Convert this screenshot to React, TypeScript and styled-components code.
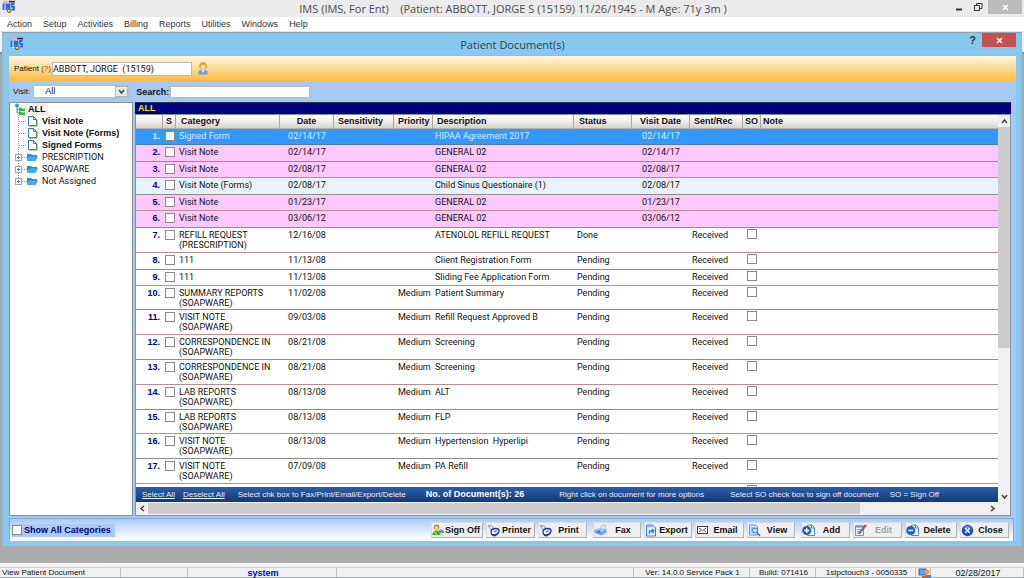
import React from "react";
import styled, { createGlobalStyle, css } from "styled-components";

const ui = `"Liberation Sans", Arial, sans-serif`;
const plain = `Roboto, "Liberation Sans", sans-serif`;
const caption = `"Open Sans", "Noto Sans", sans-serif`;

const GlobalStyle = createGlobalStyle`
  *, *::before, *::after { box-sizing: border-box; }
  body { margin: 0; font-family: ${ui}; font-size: 9px; line-height: 12px; color: #111; overflow: hidden; }
  button, input, select { font: inherit; color: inherit; margin: 0; }
  svg { display: block; flex: none; }
`;

const Page = styled.div`
  display: flex;
  flex-direction: column;
  height: 100vh;
  background: #ababab;
`;

/* ---------- application frame ---------- */
const AppBar = styled.header`
  display: grid;
  grid-template-columns: 1fr auto 1fr;
  align-items: start;
  height: 17px;
  padding-left: 2px;
  background: #ebebeb;
`;
const AppTitle = styled.h1`
  margin: 0;
  font: 400 11px/17px ${caption};
  color: #4c4c4c;
  white-space: pre;
`;
const CaptionButtons = styled.div<{ $edge?: number }>`
  display: flex;
  justify-content: flex-end;
  align-items: flex-start;
  padding-right: ${(p) => p.$edge ?? 0}px;
`;
const CaptionButton = styled.button<{ $tone?: string; $w?: number }>`
  display: grid;
  place-items: center;
  width: ${(p) => p.$w ?? 19}px;
  height: 14px;
  padding: 0;
  border: 0;
  font-size: 11px;
  color: ${(p) => (p.$tone ? "#fff" : "#333")};
  background: ${(p) => p.$tone ?? "transparent"};
`;
const MenuBar = styled.nav`
  display: flex;
  gap: 11px;
  height: 15px;
  padding-left: 7px;
  background: #fff;
  border-bottom: 1px solid #e4e4e4;
`;
const MenuItem = styled.button`
  padding: 0;
  border: 0;
  background: none;
  font-size: 9px;
  line-height: 14px;
  color: #333;
`;
const Workspace = styled.main`
  flex: 1;
  min-height: 0;
  display: flex;
  padding: 0 2px 17px;
  background: linear-gradient(#f4f4f4 20px, #8d8d8d 20px, #ababab 24px);
`;

/* ---------- document window ---------- */
const Window = styled.section`
  flex: 1;
  min-width: 0;
  display: flex;
  flex-direction: column;
  padding: 0 5px 5px 6px;
  border: 1px solid #86bfe0;
  border-top-color: #8ea4b0;
  border-bottom: 0;
  background: #88c8ec;
`;
const WindowBar = styled.header`
  display: grid;
  grid-template-columns: 1fr auto 1fr;
  height: 22px;
`;
const WindowIcon = styled.div`
  padding: 4px 0 0 1px;
`;
const WindowTitle = styled.h2`
  margin: 0;
  font: 400 11px/23px ${caption};
  color: #2d3f4d;
`;
const WindowBody = styled.div`
  flex: 1;
  min-height: 0;
  display: flex;
  flex-direction: column;
  background: #a5c9f0;
`;
const PatientBar = styled.div`
  display: flex;
  align-items: center;
  height: 26px;
  padding-left: 5px;
  border-top: 1px solid #dcae66;
  background: linear-gradient(#fff7e0, #fdd88e 55%, #fdba3c);
`;
const Label = styled.label<{ $bold?: boolean }>`
  font-size: ${(p) => (p.$bold ? 9 : 8)}px;
  font-weight: ${(p) => (p.$bold ? 700 : 400)};
  margin-right: 1px;
  white-space: pre;
`;
const Hint = styled.span`
  color: #a5381a;
`;
const TextField = styled.input<{ $h: number }>`
  width: 140px;
  height: ${(p) => p.$h}px;
  padding: 0;
  border: 1px solid #b9b9b9;
  background: #fff;
  font-family: ${plain};
  font-size: 9px;
  line-height: 11px;
  white-space: pre;
  outline: 0;
`;
const PatientIcon = styled.div`
  margin-left: 6px;
`;
const FilterBar = styled.div`
  display: flex;
  align-items: center;
  height: 21px;
  padding-left: 4px;
`;
const SelectBox = styled.div`
  display: grid;
  grid-template-columns: 1fr 13px;
  width: 96px;
  height: 13px;
  margin: 0 7px 0 2px;
  border: 1px solid #b4bcc6;
  background: #fff;
`;
const Select = styled.select`
  grid-area: 1 / 1 / 2 / 3;
  appearance: none;
  width: 100%;
  padding: 0 0 0 11px;
  border: 0;
  background: none;
  font-size: 9px;
  line-height: 11px;
  outline: 0;
`;
const SelectArrow = styled.span`
  grid-area: 1 / 2 / 2 / 3;
  display: grid;
  place-items: center;
  border: 1px solid #b4b4b4;
  background: #e9e9e9;
  pointer-events: none;
`;
const Columns = styled.div`
  flex: 1;
  min-height: 0;
  display: flex;
  gap: 2px;
  padding-right: 5px;
`;

/* ---------- category tree ---------- */
const Tree = styled.ul`
  flex: none;
  width: 124px;
  margin: 0;
  padding: 0 0 0 4px;
  list-style: none;
  border: 1px solid #8a8f98;
  background: #fff;
`;
const TreeItem = styled.li<{ $bold?: boolean }>`
  display: flex;
  align-items: center;
  height: 12px;
  font-family: ${(p) => (p.$bold ? ui : plain)};
  font-size: 9px;
  line-height: 12px;
  font-weight: ${(p) => (p.$bold ? 700 : 400)};
  white-space: nowrap;
`;
const TreeRoot = styled.span`
  padding: 0 2px;
  background: #f0f0f0;
`;
const TreeText = styled.span`
  margin-left: 2px;
`;

/* ---------- document list ---------- */
const ListPane = styled.div`
  flex: 1;
  min-width: 0;
  display: flex;
  flex-direction: column;
`;
const ListCaption = styled.div`
  flex: none;
  height: 12px;
  padding-left: 3px;
  border-top: 1px solid #2a3350;
  background: #000080;
  color: #f3e600;
  font-weight: 700;
  line-height: 11px;
`;
const ListFrame = styled.div`
  flex: 1;
  min-height: 0;
  display: grid;
  grid-template-columns: minmax(0, 1fr) 12px;
  grid-template-rows: minmax(0, 1fr) 13px;
  border: 1px solid #8a8f98;
  background: #f0f0f0;
`;
const ListMain = styled.div`
  min-height: 0;
  display: flex;
  flex-direction: column;
  background: #fff;
`;
const Viewport = styled.div`
  flex: 1;
  min-height: 0;
  overflow: hidden;
`;
const Table = styled.table`
  width: 100%;
  table-layout: fixed;
  border-collapse: separate;
  border-spacing: 0;
`;
const Col = styled.col<{ $w?: number }>`
  ${(p) => p.$w && css`width: ${p.$w}px;`}
`;
const Th = styled.th<{ $pad: number; $center?: boolean }>`
  height: 14px;
  padding: 0 0 0 ${(p) => p.$pad}px;
  text-align: ${(p) => (p.$center ? "center" : "left")};
  font-weight: 700;
  line-height: 13px;
  white-space: nowrap;
  border-right: 1px solid #a9a69d;
  border-bottom: 1px solid #b5b1a6;
  background: linear-gradient(#fff, #f4f3f0 40%, #d5d2c8);
  &:last-child { border-right: 0; }
`;
type Tone = "selected" | "note" | "form" | "plain";
const tones: Record<Tone, string> = {
  selected: "#3399ff",
  note: "#ffc8ff",
  form: "#e8f1ff",
  plain: "#ffffff",
};
const Row = styled.tr<{ $tone: Tone; $double: boolean }>`
  background: ${(p) => tones[p.$tone]};
  color: ${(p) => (p.$tone === "selected" ? "#d6ebff" : "#111")};
  td { height: ${(p) => (p.$double ? 25 : 16)}px; border-bottom: 1px solid #8e8e8e; }
  &:nth-child(even) td { height: ${(p) => (p.$double ? 25 : 17)}px; }
  &:nth-child(odd) td { border-bottom-color: ${(p) => (p.$tone === "selected" ? "#4d78a8" : "#b98f95")}; }
  &:nth-child(5n) td { height: ${(p) => (p.$double ? 24 : 16)}px; }
`;
const Td = styled.td<{ $pad?: number; $center?: boolean }>`
  padding: 2px 0 0 ${(p) => p.$pad ?? 0}px;
  vertical-align: top;
  text-align: ${(p) => (p.$center ? "center" : "left")};
  font-family: ${plain};
  font-size: 9px;
  line-height: 10px;
  white-space: pre;
`;
const NumTd = styled(Td)<{ $selected: boolean }>`
  padding-right: 3px;
  text-align: right;
  font-family: ${ui};
  font-weight: 700;
  color: ${(p) => (p.$selected ? "#d6ebff" : "#000080")};
`;
const Check = styled.input`
  display: block;
  flex: none;
  appearance: none;
  width: 10px;
  height: 10px;
  border: 1px solid #8a8a8a;
  background: #fff;
`;
const SignTd = styled(Td)`
  padding-top: 1px;
`;
const ListFooter = styled.div`
  flex: none;
  display: flex;
  align-items: center;
  height: 15px;
  padding-left: 6px;
  background: linear-gradient(#2c5fa8, #103a78);
  color: #e4ecf8;
  font-size: 8px;
  line-height: 15px;
  white-space: nowrap;
`;
const FooterLink = styled.a`
  margin-right: 8px;
  color: inherit;
  text-decoration: underline;
`;
const FooterText = styled.span<{ $gap: number }>`
  margin-left: ${(p) => p.$gap}px;
`;
const Count = styled.strong`
  margin-left: 20px;
  font-size: 9px;
  color: #fff;
`;
const VScroll = styled.div`
  display: flex;
  flex-direction: column;
  justify-content: space-between;
`;
const HScroll = styled.div`
  grid-column: 1 / 3;
  display: flex;
  padding-right: 12px;
`;
const ScrollButton = styled.button`
  display: grid;
  place-items: center;
  flex: none;
  width: 12px;
  height: 12px;
  padding: 0;
  border: 0;
  background: #f0f0f0;
  color: #555;
`;
const VTrack = styled.div`
  flex: 1;
`;
const VThumb = styled.div`
  height: 61%;
  background: #cdcdcd;
`;
const HTrack = styled.div`
  flex: 1;
  padding: 1px 0;
`;
const HThumb = styled.div`
  width: 85%;
  height: 100%;
  background: #cdcdcd;
`;

/* ---------- actions ---------- */
const ActionBar = styled.div`
  display: flex;
  align-items: center;
  height: 23px;
  margin: 2px 2px 0 0;
  padding: 0 4px 0 2px;
  border: 1px solid #86a8d8;
  border-bottom: 0;
  background: linear-gradient(#a9cbf6, #dfeafc 55%, #fff);
`;
const ShowAll = styled.label`
  display: flex;
  align-items: center;
  gap: 2px;
  height: 13px;
  padding-right: 4px;
  margin-right: auto;
  background: #a9cbf6;
  color: #000080;
  font-weight: 700;
`;
const Action = styled.button<{ $gap?: number; $w?: number }>`
  display: flex;
  align-items: center;
  width: ${(p) => p.$w ?? 49}px;
  height: 16px;
  margin-left: ${(p) => p.$gap ?? 3}px;
  padding: 0 1px 0 0;
  border: 1px solid #b4b4b4;
  border-top-color: #dcdcdc;
  border-left-color: #dcdcdc;
  background: #f0efee;
  font-size: 9px;
  font-weight: 700;
  color: #111;
  &:disabled { color: #a0a0a0; }
  span { flex: 1; text-align: center; white-space: nowrap; }
`;

/* ---------- status bar ---------- */
const StatusBar = styled.footer`
  display: flex;
  height: 15px;
  padding-top: 3px;
  border-top: 1px solid #fff;
  border-bottom: 1px solid #9fb4be;
  background: #f0f0f0;
`;
const StatusCell = styled.div<{ $w?: number; $center?: boolean; $date?: boolean; $blue?: boolean }>`
  display: flex;
  align-items: center;
  justify-content: ${(p) => (p.$center ? "center" : "flex-start")};
  ${(p) => (p.$w ? css`flex: none; width: ${p.$w}px;` : css`flex: 1;`)}
  padding-left: 2px;
  border-top: 1px solid #d2d2d2;
  border-right: 1px solid #c0c0c0;
  font-size: ${(p) => (p.$blue || p.$date ? 9 : 8)}px;
  line-height: 10px;
  white-space: nowrap;
  color: ${(p) => (p.$blue ? "#0000e6" : "#111")};
  font-weight: ${(p) => (p.$blue ? 700 : 400)};
`;

/* ---------- drawings ---------- */
const ImsLogo = () => (
  <svg width="13" height="13" viewBox="0 0 13 13" aria-hidden="true">
    <rect x="1" y="1" width="11" height="10" rx="2" fill="#dbe7f7" />
    <circle cx="2.500" cy="2" r="1.500" fill="#f4a98a" />
    <circle cx="5.500" cy="2" r="1.500" fill="#f0b9a2" />
    <path d="M7 .8h6v1.700H7z" fill="#3a2c24" />
    <path d="M1.500 3.500v6.500M4.500 10V3.500l1.500 3.500 1.500-3.500V10M12.500 4H10v2.800h2V9.500H9.500" fill="none" stroke="#2468e0" strokeWidth="1.800" />
    <circle cx="7.200" cy="10.800" r="1.800" fill="#f7d61b" stroke="#4a3a10" strokeWidth=".8" />
  </svg>
);
const Cross = () => (
  <svg width="7" height="7" viewBox="0 0 7 7" aria-hidden="true">
    <path d="M1 1l5 5M6 1L1 6" stroke="currentColor" strokeWidth="1.500" />
  </svg>
);
const Chevron = ({ d }: { d: string }) => (
  <svg width="7" height="7" viewBox="0 0 7 7" aria-hidden="true">
    <path d={d} fill="none" stroke="#444" strokeWidth="1.500" />
  </svg>
);
const UP = "M1 5l2.500-3L6 5";
const DOWN = "M1 2l2.500 3L6 2";
const LEFT = "M5 1L2 3.500 5 6";
const RIGHT = "M2 1l3 2.500L2 6";

const Person = () => (
  <svg width="10" height="13" viewBox="0 0 10 13" aria-hidden="true">
    <circle cx="5" cy="4" r="3.800" fill="#dca21c" />
    <ellipse cx="5" cy="5" rx="2.400" ry="2.600" fill="#fbdcae" />
    <path d="M.5 12.500V10C.5 8.500 2 8 5 8s4.500.5 4.500 2v2.500z" fill="#5aa5e6" />
    <path d="M3.500 8.200L5 11l1.500-2.800z" fill="#fff" />
  </svg>
);
const RootIcon = () => (
  <svg width="12" height="12" viewBox="0 0 12 12" aria-hidden="true">
    <circle cx="3" cy="2.500" r="2" fill="#3b8fe0" />
    <path d="M3 4v6h3M3 6.500h3" fill="none" stroke="#5b8ea0" />
    <path d="M5 4.500h2l1 1h3V8H5zM5 8.500h2l1 1h3V12H5z" fill="#44b03c" />
  </svg>
);
const LeafIcon = () => (
  <svg width="26" height="12" viewBox="0 0 26 12" aria-hidden="true">
    <path d="M4.500 0v12M5 6.500h8" stroke="#999" strokeDasharray="1 1" />
    <path d="M14.500 1.500h5l3 3v6h-8z" fill="#fff" stroke="#3f6fc4" />
    <path d="M19.500 1.500v3h3" fill="none" stroke="#3f6fc4" />
    <path d="M15 11h8V5" fill="none" stroke="#6a9a3c" />
  </svg>
);
const FolderIcon = ({ last }: { last?: boolean }) => (
  <svg width="26" height="12" viewBox="0 0 26 12" aria-hidden="true">
    <path d={last ? "M4.500 0v4" : "M4.500 0v12"} stroke="#999" strokeDasharray="1 1" />
    <path d="M8 6.500h5" stroke="#999" strokeDasharray="1 1" />
    <rect x="1.500" y="3.500" width="6" height="6" fill="#fff" stroke="#a4a4a4" />
    <path d="M3 6.500h3M4.500 5v3" stroke="#6676a8" />
    <path d="M13 3h4l1 1h5v2h-8l-2 4z" fill="#2b8ad8" />
    <path d="M13 10l2.500-4.500H24L21.500 10z" fill="#41aaf2" />
  </svg>
);
const SignIcon = () => (
  <svg width="12" height="12" viewBox="0 0 12 12" aria-hidden="true">
    <circle cx="4.500" cy="3" r="2.600" fill="#c9781c" />
    <circle cx="4.500" cy="3.800" r="1.700" fill="#f9d3a0" />
    <path d="M.5 11c0-3 1.500-4.500 4-4.500S8.500 8 8.500 11z" fill="#3fae2a" />
    <path d="M7 9V6l2.500-.5L12 7v2z" fill="#5a8fd0" />
    <path d="M2 8l3 2" stroke="#ffe34a" />
  </svg>
);
const PrinterIcon = () => (
  <svg width="13" height="13" viewBox="0 0 13 13" aria-hidden="true">
    <path d="M1 1.500l4 .5 3.500 4L5 7z" fill="#dce8fa" stroke="#6a87c0" strokeWidth=".8" />
    <path d="M4 8c0-2 2-3.500 5-3.500 2 0 3 .8 3 2.200C12 9 9.500 11 7 11c-2 0-3-1-3-3z" fill="#f3f6fc" stroke="#25359a" strokeWidth="1.300" />
    <path d="M4 9c1 2 4 2.500 8-1.500L11.500 10 8 12.500 5 12z" fill="#2a3f9c" />
    <path d="M6 7.500l3-1.500 1.500 1L8 8.500z" fill="#5d8fe6" />
  </svg>
);
const FaxIcon = () => (
  <svg width="13" height="12" viewBox="0 0 13 12" aria-hidden="true">
    <path d="M.5 5.500L5 4l7.500 1v3.500L7.500 11.500.5 9z" fill="#69a5ea" />
    <path d="M.5 5.500L5 4l7.500 1-5 3z" fill="#b5d6fa" />
    <path d="M6 4.500L9 .8l3 1-2 4z" fill="#e4f0fe" stroke="#7fa8dc" strokeWidth=".7" />
    <circle cx="5" cy="7.500" r="1.500" fill="#3f78d0" />
  </svg>
);
const ExportIcon = () => (
  <svg width="12" height="13" viewBox="0 0 12 13" aria-hidden="true">
    <path d="M1.500 1h6l3 3v8h-9z" fill="#e6f1ff" stroke="#3a7bd0" />
    <path d="M1.500 1h6v2h-6z" fill="#7fb2ee" />
    <path d="M4.500 10V7h4M7 5l2 2-2 2" fill="none" stroke="#2d7be0" strokeWidth="1.300" />
  </svg>
);
const EmailIcon = () => (
  <svg width="13" height="12" viewBox="0 0 13 12" aria-hidden="true">
    <rect x="1.500" y="2.500" width="10" height="7" fill="#fff" stroke="#444" />
    <path d="M3 4l3.500 2.500L10 4M3 8l2-1.500M10 8L8 6.500" fill="none" stroke="#444" strokeWidth=".9" />
  </svg>
);
const ViewIcon = () => (
  <svg width="13" height="13" viewBox="0 0 13 13" aria-hidden="true">
    <path d="M1.500 1h6l2 2v8h-8z" fill="#d9e9fd" stroke="#5b92d8" />
    <path d="M3 4h4M3 6h3M3 8h3" stroke="#5b92d8" />
    <circle cx="7" cy="6.500" r="2.500" fill="#c4e0ff" stroke="#3f7fd0" />
    <path d="M9 8.500l3 3.500" stroke="#3f7fd0" strokeWidth="1.500" />
  </svg>
);
const PageBadge = ({ plus }: { plus?: boolean }) => (
  <svg width="13" height="13" viewBox="0 0 13 13" aria-hidden="true">
    <path d="M5.500 1h4.500l2.500 2.500v8h-7z" fill="#eaf3ff" stroke="#4a8ad8" />
    <path d="M9.500 1v3h3" fill="none" stroke="#4a8ad8" />
    <circle cx="4.700" cy="6.500" r="4.500" fill="#1f5fc8" />
    <path d={plus ? "M2.200 6.500h5M4.700 4v5" : "M2.200 6.500h5"} stroke="#fff" strokeWidth="1.400" />
  </svg>
);
const EditIcon = () => (
  <svg width="13" height="13" viewBox="0 0 13 13" aria-hidden="true">
    <path d="M1.500 2h8v9.500h-8z" fill="#f2f2f2" stroke="#8a9098" />
    <path d="M1.500 1.500h8v2h-8z" fill="#7390b0" />
    <path d="M3 5.500h4M3 7.500h3M3 9.500h3" stroke="#9aa2ac" />
    <path d="M5 9.500l5-6" stroke="#56789c" strokeWidth="2" />
    <path d="M9.500 4L12 1" stroke="#c9452e" strokeWidth="2.200" />
  </svg>
);
const CloseIcon = () => (
  <svg width="13" height="13" viewBox="0 0 13 13" aria-hidden="true">
    <circle cx="6.500" cy="6.500" r="5.700" fill="#1d55b0" />
    <path d="M2.500 4.500a4.500 4.500 0 018 0z" fill="#5d96e4" />
    <path d="M4.300 4.300l4.400 4.400M8.700 4.300L4.300 8.700" stroke="#fff" strokeWidth="1.600" />
  </svg>
);
const StatusIcon = () => (
  <svg width="13" height="10" viewBox="0 0 13 10" aria-hidden="true">
    <rect x="1" y="1" width="7" height="6" fill="#5aa3ee" stroke="#2f66b8" />
    <circle cx="9" cy="4" r="2.500" fill="#f0a040" />
    <path d="M4 8h8v2H4z" fill="#d8562c" />
    <path d="M8 7h5v3H9z" fill="#3f84dc" />
  </svg>
);

/* ---------- data ---------- */
type Doc = {
  tone?: Tone;
  cat: string;
  date: string;
  prio?: string;
  desc: string;
  status?: string;
  visit?: string;
};
const docs: Doc[] = [
  { tone: "selected", cat: "Signed Form", date: "02/14/17", desc: "HIPAA Agreement 2017", visit: "02/14/17" },
  { tone: "note", cat: "Visit Note", date: "02/14/17", desc: "GENERAL 02", visit: "02/14/17" },
  { tone: "note", cat: "Visit Note", date: "02/08/17", desc: "GENERAL 02", visit: "02/08/17" },
  { tone: "form", cat: "Visit Note (Forms)", date: "02/08/17", desc: "Child Sinus Questionaire (1)", visit: "02/08/17" },
  { tone: "note", cat: "Visit Note", date: "01/23/17", desc: "GENERAL 02", visit: "01/23/17" },
  { tone: "note", cat: "Visit Note", date: "03/06/12", desc: "GENERAL 02", visit: "03/06/12" },
  { cat: "REFILL REQUEST\n(PRESCRIPTION)", date: "12/16/08", desc: "ATENOLOL REFILL REQUEST", status: "Done" },
  { cat: "111", date: "11/13/08", desc: "Client Registration Form", status: "Pending" },
  { cat: "111", date: "11/13/08", desc: "Sliding Fee Application Form", status: "Pending" },
  { cat: "SUMMARY REPORTS\n(SOAPWARE)", date: "11/02/08", prio: "Medium", desc: "Patient Summary", status: "Pending" },
  { cat: "VISIT NOTE\n(SOAPWARE)", date: "09/03/08", prio: "Medium", desc: "Refill Request Approved B", status: "Pending" },
  { cat: "CORRESPONDENCE IN\n(SOAPWARE)", date: "08/21/08", prio: "Medium", desc: "Screening", status: "Pending" },
  { cat: "CORRESPONDENCE IN\n(SOAPWARE)", date: "08/21/08", prio: "Medium", desc: "Screening", status: "Pending" },
  { cat: "LAB REPORTS\n(SOAPWARE)", date: "08/13/08", prio: "Medium", desc: "ALT", status: "Pending" },
  { cat: "LAB REPORTS\n(SOAPWARE)", date: "08/13/08", prio: "Medium", desc: "FLP", status: "Pending" },
  { cat: "VISIT NOTE\n(SOAPWARE)", date: "08/13/08", prio: "Medium", desc: "Hypertension  Hyperlipi", status: "Pending" },
  { cat: "VISIT NOTE\n(SOAPWARE)", date: "07/09/08", prio: "Medium", desc: "PA Refill", status: "Pending" },
];
const columnWidths = [27, 13, 104, 54, 60, 39, 141, 58, 58, 53, 18];

const DocRow = ({ doc, index }: { doc: Doc; index: number }) => {
  const tone = doc.tone ?? "plain";
  return (
    <Row $tone={tone} $double={doc.cat.includes("\n")}>
      <NumTd $selected={tone === "selected"}>{index + 1}.</NumTd>
      <Td $pad={2}>
        <Check type="checkbox" aria-label={`Select document ${index + 1}`} />
      </Td>
      <Td $pad={3}>{doc.cat}</Td>
      <Td $center>{doc.date}</Td>
      <Td />
      <Td $pad={4}>{doc.prio}</Td>
      <Td $pad={2}>{doc.desc}</Td>
      <Td $pad={3}>{doc.status}</Td>
      <Td $center>{doc.visit}</Td>
      <Td $pad={2}>{doc.status && "Received"}</Td>
      <SignTd $pad={4}>
        {doc.status && <Check type="checkbox" aria-label={`Sign off document ${index + 1}`} />}
      </SignTd>
      <Td />
    </Row>
  );
};

export default function App() {
  return (
    <>
      <GlobalStyle />
      <Page>
        <AppBar>
          <ImsLogo />
          <AppTitle>{"IMS (IMS, For Ent)    (Patient: ABBOTT, JORGE S (15159) 11/26/1945 - M Age: 71y 3m )"}</AppTitle>
          <CaptionButtons $edge={2}>
            <CaptionButton aria-label="Minimize">
              <svg width="7" height="7" viewBox="0 0 7 7"><path d="M0 5.500h6" stroke="currentColor" strokeWidth="2" /></svg>
            </CaptionButton>
            <CaptionButton aria-label="Restore">
              <svg width="9" height="8" viewBox="0 0 9 8">
                <path d="M.5 2.500h5v5h-5zM2.500 2V.5h5.500v5H6" fill="none" stroke="currentColor" />
              </svg>
            </CaptionButton>
            <CaptionButton $tone="#bcbcbc" $w={34} aria-label="Close application"><Cross /></CaptionButton>
          </CaptionButtons>
        </AppBar>
        <MenuBar>
          {["Action", "Setup", "Activities", "Billing", "Reports", "Utilities", "Windows", "Help"].map((m) => (
            <MenuItem key={m}>{m}</MenuItem>
          ))}
        </MenuBar>

        <Workspace>
          <Window>
            <WindowBar>
              <WindowIcon><ImsLogo /></WindowIcon>
              <WindowTitle>Patient Document(s)</WindowTitle>
              <CaptionButtons>
                <CaptionButton aria-label="Help"><b>?</b></CaptionButton>
                <CaptionButton $tone="#c75050" $w={34} aria-label="Close window"><Cross /></CaptionButton>
              </CaptionButtons>
            </WindowBar>
            <WindowBody>
              <PatientBar>
                <Label htmlFor="patient">Patient <Hint>(?)</Hint></Label>
                <TextField id="patient" $h={14} defaultValue="ABBOTT, JORGE  (15159)" />
                <PatientIcon><Person /></PatientIcon>
              </PatientBar>
              <FilterBar>
                <Label htmlFor="visit">Visit:</Label>
                <SelectBox>
                  <Select id="visit" defaultValue="All"><option>All</option></Select>
                  <SelectArrow><Chevron d={DOWN} /></SelectArrow>
                </SelectBox>
                <Label $bold htmlFor="search">Search:</Label>
                <TextField id="search" $h={12} />
              </FilterBar>
              <Columns>
                <Tree>
                  <TreeItem $bold><RootIcon /><TreeRoot>ALL</TreeRoot></TreeItem>
                  {["Visit Note", "Visit Note (Forms)", "Signed Forms"].map((t) => (
                    <TreeItem $bold key={t}><LeafIcon /><TreeText>{t}</TreeText></TreeItem>
                  ))}
                  {["PRESCRIPTION", "SOAPWARE", "Not Assigned"].map((t, i) => (
                    <TreeItem key={t}><FolderIcon last={i === 2} /><TreeText>{t}</TreeText></TreeItem>
                  ))}
                </Tree>
                <ListPane>
                  <ListCaption>ALL</ListCaption>
                  <ListFrame>
                    <ListMain>
                      <Viewport>
                        <Table>
                          <colgroup>
                            {columnWidths.map((w, i) => <Col key={i} $w={w} />)}
                            <Col />
                          </colgroup>
                          <thead>
                            <tr>
                              <Th $pad={0} />
                              <Th $pad={3}>S</Th>
                              <Th $pad={5}>Category</Th>
                              <Th $pad={0} $center>Date</Th>
                              <Th $pad={4}>Sensitivity</Th>
                              <Th $pad={4}>Priority</Th>
                              <Th $pad={4}>Description</Th>
                              <Th $pad={5}>Status</Th>
                              <Th $pad={0} $center>Visit Date</Th>
                              <Th $pad={4}>Sent/Rec</Th>
                              <Th $pad={2}>SO</Th>
                              <Th $pad={2}>Note</Th>
                            </tr>
                          </thead>
                          <tbody>
                            {docs.map((d, i) => <DocRow key={i} doc={d} index={i} />)}
                            <Row $tone="plain" $double>
                              <Td colSpan={10} />
                              <SignTd $pad={4}><Check type="checkbox" aria-label="Sign off document 18" /></SignTd>
                              <Td />
                            </Row>
                          </tbody>
                        </Table>
                      </Viewport>
                      <ListFooter>
                        <FooterLink href="#select">Select All</FooterLink>
                        <FooterLink href="#deselect">Deselect All</FooterLink>
                        <FooterText $gap={5}>Select chk box to Fax/Print/Email/Export/Delete</FooterText>
                        <Count>No. of Document(s): 26</Count>
                        <FooterText $gap={35}>Right click on document for more options</FooterText>
                        <FooterText $gap={26}>Select SO check box to sign off document</FooterText>
                        <FooterText $gap={11}>SO = Sign Off</FooterText>
                      </ListFooter>
                    </ListMain>
                    <VScroll>
                      <ScrollButton aria-label="Scroll up"><Chevron d={UP} /></ScrollButton>
                      <VTrack><VThumb /></VTrack>
                      <ScrollButton aria-label="Scroll down"><Chevron d={DOWN} /></ScrollButton>
                    </VScroll>
                    <HScroll>
                      <ScrollButton aria-label="Scroll left"><Chevron d={LEFT} /></ScrollButton>
                      <HTrack><HThumb /></HTrack>
                      <ScrollButton aria-label="Scroll right"><Chevron d={RIGHT} /></ScrollButton>
                    </HScroll>
                  </ListFrame>
                </ListPane>
              </Columns>
              <ActionBar>
                <ShowAll><Check type="checkbox" />Show All Categories</ShowAll>
                <Action $w={52}><SignIcon /><span>Sign Off</span></Action>
                <Action><PrinterIcon /><span>Printer</span></Action>
                <Action><PrinterIcon /><span>Print</span></Action>
                <Action $gap={6} $w={48}><FaxIcon /><span>Fax</span></Action>
                <Action $w={48}><ExportIcon /><span>Export</span></Action>
                <Action><EmailIcon /><span>Email</span></Action>
                <Action $w={48}><ViewIcon /><span>View</span></Action>
                <Action $gap={6}><PageBadge plus /><span>Add</span></Action>
                <Action disabled><EditIcon /><span>Edit</span></Action>
                <Action $w={52}><PageBadge /><span>Delete</span></Action>
                <Action><CloseIcon /><span>Close</span></Action>
              </ActionBar>
            </WindowBody>
          </Window>
        </Workspace>

        <StatusBar>
          <StatusCell $w={121}>View Patient Document</StatusCell>
          <StatusCell $w={67} />
          <StatusCell $w={149} $center $blue>system</StatusCell>
          <StatusCell />
          <StatusCell $w={116} $center>Ver: 14.0.0 Service Pack 1</StatusCell>
          <StatusCell $w={66} $center>Build: 071416</StatusCell>
          <StatusCell $w={100} $center>1stpctouch3 - 0050335</StatusCell>
          <StatusCell $w={15}><StatusIcon /></StatusCell>
          <StatusCell $w={93} $center $date>02/28/2017</StatusCell>
        </StatusBar>
      </Page>
    </>
  );
}
